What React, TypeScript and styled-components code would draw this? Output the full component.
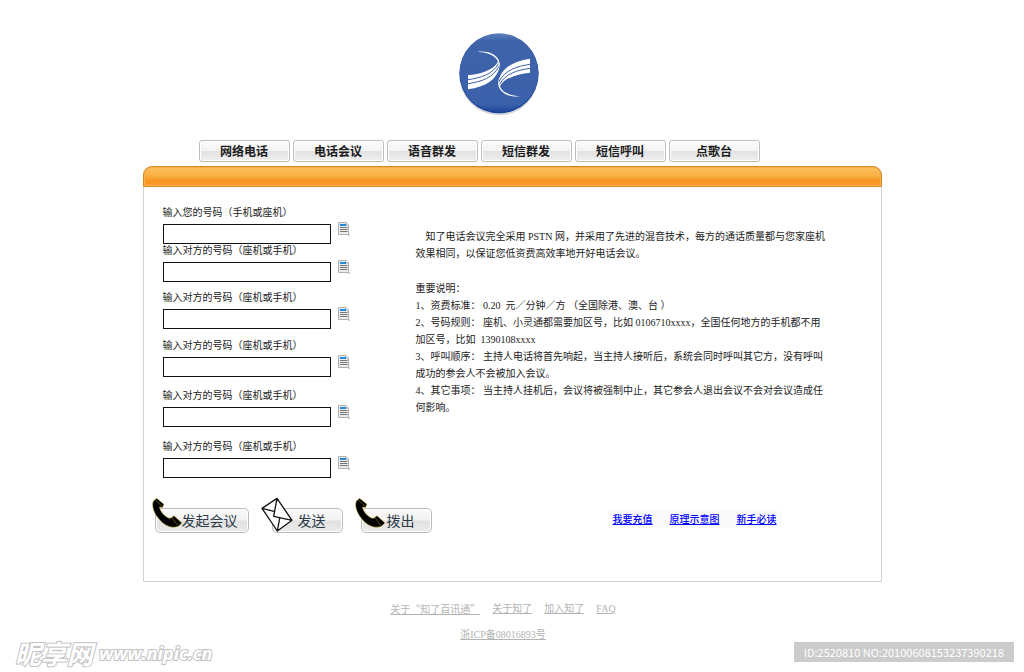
import React from "react";
import styled, { createGlobalStyle } from "styled-components";

const serif = `"Liberation Serif", "Noto Sans CJK SC", serif`;
const sans = `"Noto Sans CJK SC", "Liberation Sans", sans-serif`;

const GlobalStyle = createGlobalStyle`
  * { box-sizing: border-box; }
  body { margin: 0; background: #fff; color: #222; font: 10px/17px ${serif}; }
  button, input { font: inherit; color: inherit; }
`;

const Page = styled.div`
  display: flex;
  flex-direction: column;
  min-height: 100vh;
`;

const Main = styled.main`
  width: 100%;
  max-width: 739px;
  margin: 0 auto;
`;

const Header = styled.header`
  display: flex;
  justify-content: center;
  padding: 33px 26px 23px 0;
  svg { display: block; }
`;

const Tabs = styled.nav`
  display: flex;
  flex-wrap: wrap;
  gap: 3px;
  padding: 0 0 4px 56px;
`;

const Tab = styled.button`
  width: 91px;
  height: 22px;
  padding: 0;
  border: 1px solid #bdbdbd;
  border-radius: 3px;
  background: linear-gradient(#fbfbfb, #f3f3f3 50%, #e2e2e2 52%, #efefef);
  box-shadow: inset 0 0 0 1px #fff;
  color: #1c1c1c;
  font: 700 12px/18px ${sans};
  cursor: pointer;
`;

const Bar = styled.div`
  height: 21px;
  border: 1px solid #dd831f;
  border-radius: 9px 9px 0 0;
  background: linear-gradient(#fbc25c, #fab044 45%, #f7931e 75%, #f99f33);
  box-shadow: inset 0 0 0 1px #fbb04c;
`;

const Panel = styled.section`
  border: 1px solid #d0d4d4;
  border-top: 0;
  padding: 20px 19px 48px;
`;

const Columns = styled.div`
  display: grid;
  grid-template-columns: 253px 1fr;
`;

const Form = styled.form`
  display: flex;
  flex-direction: column;
  align-items: flex-start;
`;

const Field = styled.div<{ $space: number }>`
  display: grid;
  grid-template-columns: 168px auto;
  column-gap: 6px;
  row-gap: 5px;
  margin-top: ${(p) => p.$space}px;
`;

const Label = styled.label`
  grid-column: 1 / -1;
  line-height: 12px;
`;

const Input = styled.input`
  width: 100%;
  height: 20px;
  padding: 0 4px;
  border: 1px solid #111;
  background: #fff;
`;

const PickButton = styled.button`
  width: 14px;
  height: 14px;
  margin-top: -2px;
  padding: 0;
  border: 0;
  background: none;
  cursor: pointer;
  svg { display: block; }
`;

const Notes = styled.div`
  padding-top: 21px;
  white-space: pre-wrap;
  p { margin: 0; }
`;

const Heading = styled.p`
  padding-top: 18px;
`;

const Rules = styled.div``;

const BottomRow = styled.div`
  display: flex;
  flex-wrap: wrap;
  align-items: center;
  justify-content: space-between;
  margin: 30px 80px 0 -11px;
`;

const Actions = styled.div`
  display: flex;
  gap: 12px;
`;

const Action = styled.div<{ $overhang: number }>`
  position: relative;
  padding-left: ${(p) => p.$overhang}px;
  svg {
    position: absolute;
    left: 0;
    top: -11px;
    pointer-events: none;
  }
`;

const ActionButton = styled.button<{ $wide?: boolean }>`
  display: block;
  height: 25px;
  padding: ${(p) => (p.$wide ? "0 10px 2px 26px" : "0 16px 2px 25px")};
  border: 1px solid #bcbcbc;
  border-radius: 5px;
  background: linear-gradient(#fafafa, #f2f2f2 48%, #e0e0e0 52%, #ececec);
  box-shadow: inset 0 0 0 1px #fff;
  color: #2c3a48;
  font: 14px/20px ${sans};
  cursor: pointer;
`;

const HelpLinks = styled.nav`
  display: flex;
  gap: 17px;
  padding: 0 5px;
  margin-bottom: 2px;
  background: #fafafa;
  a { color: #00f; font-weight: 500; }
`;

const Footer = styled.footer`
  display: flex;
  flex-direction: column;
  align-items: center;
  gap: 12px;
  padding: 20px 18px 0 0;
  line-height: 14px;
`;

const FooterLinks = styled.div`
  display: flex;
  gap: 12px;
`;

const FooterLink = styled.a<{ $cjk?: boolean }>`
  color: #b4b4b4;
  font-family: ${(p) => (p.$cjk ? sans : serif)};
`;

const Marks = styled.div`
  display: flex;
  justify-content: space-between;
  align-items: flex-start;
  padding: 0 10px 0 15px;
`;

const Brand = styled.div`
  display: flex;
  align-items: center;
  gap: 6px;
  height: 22px;
  color: #fff;
  paint-order: stroke fill;
  -webkit-text-stroke: 2px #c2c2c2;
`;

const BrandName = styled.span`
  font: italic 700 26px/22px ${sans};
`;

const BrandSite = styled.span`
  font: italic 700 18px/22px "Open Sans", sans-serif;
`;

const Serial = styled.div`
  padding: 0 10px;
  background: #ccc;
  color: #fff;
  font: 11px/20px ${sans};
`;

const wing =
  "M84 165 C118 161 158 152 174 125 C170 108 146 96 112 94 C150 91 179 104 180 136 C170 180 138 198 84 207 Z";

function Logo() {
  return (
    <svg width="82" height="84" viewBox="54 38 246 252" role="img" aria-label="知了">
      <defs>
        <linearGradient id="disc" x1="0" y1="0" x2="0" y2="1">
          <stop offset="0" stopColor="#5b7fba" />
          <stop offset="0.1" stopColor="#3e63a9" />
          <stop offset="0.9" stopColor="#3b61ab" />
          <stop offset="1" stopColor="#1c479c" />
        </linearGradient>
      </defs>
      <circle cx="177" cy="168" r="117" fill="#d4d4d4" />
      <circle cx="177" cy="160" r="119" fill="#16429a" />
      <circle cx="177" cy="157" r="118" fill="url(#disc)" />
      {[0, 180].map((turn) => (
        <g key={turn} transform={`rotate(${turn} 177 161)`}>
          <path d={wing} fill="#fff" />
          <path
            d="M84 178 C120 173 158 163 175 130 M84 190 C124 184 160 173 178 136"
            fill="none"
            stroke="#3d62aa"
            strokeWidth="3"
          />
        </g>
      ))}
    </svg>
  );
}

function ListIcon() {
  return (
    <svg width="14" height="14" viewBox="0 0 14 14" aria-hidden="true">
      <path d="M1.5 .5H9L11.5 3V12.5H1.5Z" fill="#ececec" stroke="#b0b0b0" />
      <path d="M9 .5V3H11.5" fill="#fff" stroke="#aaa" />
      <path d="M11 13.5H13M12.5 12V13.5" stroke="#ccc" />
      <path d="M3 3H9" stroke="#1f8be0" strokeWidth="2" />
      <path d="M3 5.500H10.500M3 7.500H10.500M3 9.500H10.500" stroke="#777" />
    </svg>
  );
}

function PhoneIcon() {
  return (
    <svg width="32" height="32" viewBox="35 20 96 96" aria-hidden="true">
      <path
        d="M49 24 L71 42 L66 52 L58 50 C58 62 74 80 88 84 L92 83 L101 76 L125 98 L114 108 C95 116 70 105 55 85 C40 68 33 45 39 32 Z"
        fill="#000"
        stroke="#d6c93a"
        strokeWidth="1.500"
      />
      <path d="M45 29 L65 48 M95 82 L112 105" stroke="#b5a52c" strokeWidth="1.500" />
    </svg>
  );
}

function MailIcon() {
  return (
    <svg width="32" height="35" viewBox="362 17 96 105" aria-hidden="true">
      <path d="M410 21 L455 87 L411 119 L365 51 Z" fill="#fff" />
      <path
        d="M410 21 L455 87 L411 119 L365 51 Z M410 21 L400 75 L455 87 M365 51 L404 61 M411 119 L418 81"
        fill="none"
        stroke="#161616"
        strokeWidth="4"
        strokeLinejoin="round"
      />
    </svg>
  );
}

const tabs = ["网络电话", "电话会议", "语音群发", "短信群发", "短信呼叫", "点歌台"];

const fields = [
  { label: "输入您的号码（手机或座机）", space: 0 },
  { label: "输入对方的号码（座机或手机）", space: 1 },
  { label: "输入对方的号码（座机或手机）", space: 10 },
  { label: "输入对方的号码（座机或手机）", space: 11 },
  { label: "输入对方的号码（座机或手机）", space: 13 },
  { label: "输入对方的号码（座机或手机）", space: 14 },
];

export default function App() {
  return (
    <Page>
      <GlobalStyle />
      <Main>
        <Header>
          <Logo />
        </Header>
        <Tabs>
          {tabs.map((t) => (
            <Tab key={t} type="button">{t}</Tab>
          ))}
        </Tabs>
        <Bar />
        <Panel>
          <Columns>
            <Form>
              {fields.map((f, i) => (
                <Field key={i} $space={f.space}>
                  <Label htmlFor={`number-${i}`}>{f.label}</Label>
                  <Input id={`number-${i}`} type="tel" />
                  <PickButton type="button" aria-label="通讯录">
                    <ListIcon />
                  </PickButton>
                </Field>
              ))}
            </Form>
            <Notes>
              <p>
                {"    知了电话会议完全采用 PSTN 网，并采用了先进的混音技术，每方的通话质量都与您家座机"}
                <br />
                效果相同，以保证您低资费高效率地开好电话会议。
              </p>
              <Heading>重要说明：</Heading>
              <Rules>
                <p>{"1、资费标准： 0.20  元／分钟／方 （全国除港、澳、台 ）"}</p>
                <p>
                  {"2、号码规则： 座机、小灵通都需要加区号，比如 0106710xxxx，全国任何地方的手机都不用"}
                  <br />
                  {"加区号，比如  1390108xxxx"}
                </p>
                <p>
                  {"3、呼叫顺序： 主持人电话将首先响起，当主持人接听后，系统会同时呼叫其它方，没有呼叫"}
                  <br />
                  成功的参会人不会被加入会议。
                </p>
                <p>
                  {"4、其它事项： 当主持人挂机后，会议将被强制中止，其它参会人退出会议不会对会议造成任"}
                  <br />
                  何影响。
                </p>
              </Rules>
            </Notes>
          </Columns>
          <BottomRow>
            <Actions>
              <Action $overhang={3}>
                <ActionButton type="button" $wide>发起会议</ActionButton>
                <PhoneIcon />
              </Action>
              <Action $overhang={11}>
                <ActionButton type="button">发送</ActionButton>
                <MailIcon />
              </Action>
              <Action $overhang={6}>
                <ActionButton type="button">拨出</ActionButton>
                <PhoneIcon />
              </Action>
            </Actions>
            <HelpLinks>
              <a href="#recharge">我要充值</a>
              <a href="#diagram">原理示意图</a>
              <a href="#guide">新手必读</a>
            </HelpLinks>
          </BottomRow>
        </Panel>
      </Main>
      <Footer>
        <FooterLinks>
          <FooterLink href="#product" $cjk>关于“知了百讯通”</FooterLink>
          <FooterLink href="#about">关于知了</FooterLink>
          <FooterLink href="#join">加入知了</FooterLink>
          <FooterLink href="#faq">FAQ</FooterLink>
        </FooterLinks>
        <FooterLink href="#icp">浙ICP备08016893号</FooterLink>
      </Footer>
      <Marks>
        <Brand>
          <BrandName>昵享网</BrandName>
          <BrandSite>www.nipic.cn</BrandSite>
        </Brand>
        <Serial>ID:2520810 NO:20100608153237390218</Serial>
      </Marks>
    </Page>
  );
}
